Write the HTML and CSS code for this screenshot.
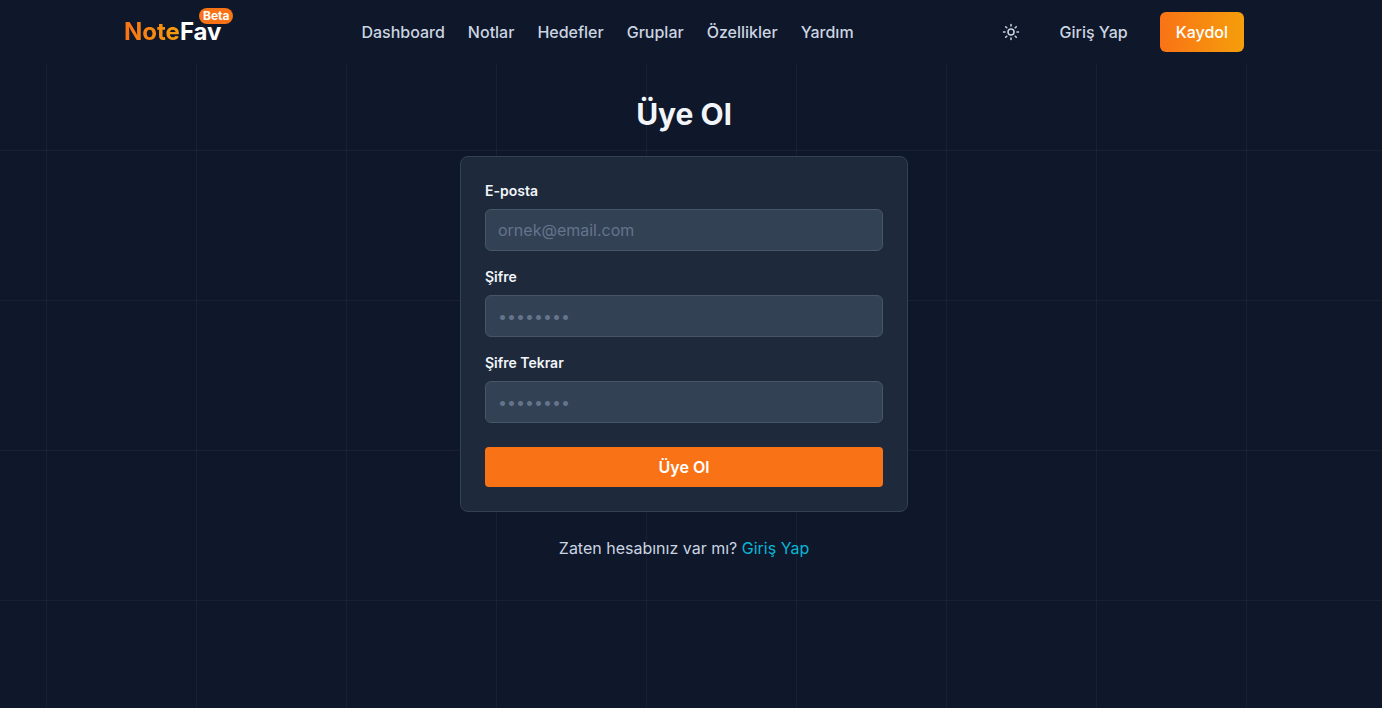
FILE: index.html
```html
<!DOCTYPE html>
<html lang="tr">
<head>
<meta charset="utf-8">
<meta name="viewport" content="width=device-width, initial-scale=1">
<title>NoteFav - Üye Ol</title>
<link rel="stylesheet" href="styles.css">
</head>
<body class="page">
<header class="header">
  <div class="header-inner">
    <a class="logo" href="#"><span class="logo-note">Note</span><span class="logo-fav">Fav</span><span class="logo-badge">Beta</span></a>
    <nav class="nav">
      <a href="#">Dashboard</a>
      <a href="#">Notlar</a>
      <a href="#">Hedefler</a>
      <a href="#">Gruplar</a>
      <a href="#">Özellikler</a>
      <a href="#">Yardım</a>
    </nav>
    <div class="actions">
      <button class="theme-toggle" type="button" aria-label="Tema">
        <svg width="18" height="18" viewBox="0 0 24 24" fill="none" stroke="currentColor" stroke-width="2" stroke-linecap="round" stroke-linejoin="round" aria-hidden="true"><circle cx="12" cy="12" r="4"/><path d="M12 2v2M12 20v2M4.93 4.93l1.41 1.41M17.66 17.66l1.41 1.41M2 12h2M20 12h2M6.34 17.66l-1.41 1.41M19.07 4.93l-1.41 1.41"/></svg>
      </button>
      <a class="btn" href="#">Giriş Yap</a>
      <a class="btn btn-signup" href="#">Kaydol</a>
    </div>
  </div>
</header>
<main class="main">
  <h1 class="title">Üye Ol</h1>
  <form class="card">
    <div class="field">
      <label for="email">E-posta</label>
      <input id="email" type="email" placeholder="ornek@email.com">
    </div>
    <div class="field">
      <label for="password">Şifre</label>
      <input id="password" type="password" placeholder="••••••••">
    </div>
    <div class="field">
      <label for="password-repeat">Şifre Tekrar</label>
      <input id="password-repeat" type="password" placeholder="••••••••">
    </div>
    <button class="submit" type="submit">Üye Ol</button>
  </form>
  <p class="login-hint">Zaten hesabınız var mı? <a href="#">Giriş Yap</a></p>
</main>
</body>
</html>
```
FILE: styles.css
```css
*, *::before, *::after { box-sizing: border-box; }

.page {
  margin: 0;
  padding-right: 14px;
  min-height: 100vh;
  font-family: Inter, "Liberation Sans", sans-serif;
  font-size: 16px;
  line-height: 24px;
  color: #f1f5f9;
  background-color: #0f172a;
  background-image:
    linear-gradient(to right, rgba(255, 255, 255, 0.04) 1px, transparent 1px),
    linear-gradient(to bottom, rgba(255, 255, 255, 0.04) 1px, transparent 1px);
  background-size: 150px 150px;
  background-position: 46px 0;
}

a { color: inherit; text-decoration: none; }
button, input { font: inherit; }

.header {
  margin-right: -14px;
  padding-right: 14px;
  background: #0f172a;
}

.header-inner {
  max-width: 1152px;
  height: 64px;
  margin: 0 auto;
  padding: 0 16px;
  display: flex;
  align-items: center;
  justify-content: space-between;
}

.logo {
  position: relative;
  font-size: 24px;
  line-height: 32px;
  font-weight: 700;
}

.logo-note {
  color: transparent;
  background: linear-gradient(to right, #f97316, #f59e0b);
  -webkit-background-clip: text;
  background-clip: text;
}

.logo-fav { color: #ffffff; }

.logo-badge {
  position: absolute;
  top: -8px;
  right: -12px;
  padding: 0 4px;
  border-radius: 8px;
  background: #f97316;
  color: #ffffff;
  font-size: 12px;
  line-height: 16px;
}

.nav {
  display: flex;
  gap: 23px;
  color: #cbd5e1;
  font-weight: 500;
}

.actions {
  display: flex;
  align-items: center;
  gap: 16px;
  color: #cbd5e1;
}

.theme-toggle {
  display: flex;
  padding: 8px;
  border: 0;
  background: none;
  color: inherit;
}

.btn {
  padding: 8px 16px;
  border-radius: 6px;
  font-weight: 500;
}

.btn-signup {
  color: #ffffff;
  background: linear-gradient(to right, #f97316, #f59e0b);
}

.main {
  max-width: 480px;
  margin: 0 auto;
  padding: 32px 16px;
}

.title {
  margin: 0 0 24px;
  font-size: 30px;
  line-height: 36px;
  font-weight: 700;
  text-align: center;
}

.card {
  display: flex;
  flex-direction: column;
  gap: 16px;
  padding: 24px;
  border: 1px solid #334155;
  border-radius: 8px;
  background: #1e293b;
}

.field {
  display: flex;
  flex-direction: column;
  gap: 8px;
}

.field label {
  font-size: 14px;
  line-height: 20px;
  font-weight: 600;
}

.field input {
  width: 100%;
  height: 42px;
  padding: 8px 12px;
  border: 1px solid #475569;
  border-radius: 6px;
  background: #334155;
  color: #f1f5f9;
}

.field input::placeholder { color: #64748b; }

.submit {
  margin-top: 8px;
  padding: 8px 16px;
  border: 0;
  border-radius: 4px;
  background: #f97316;
  color: #ffffff;
  font-weight: 600;
}

.login-hint {
  margin: 24px 0 0;
  text-align: center;
  color: #cbd5e1;
}

.login-hint a { color: #06b6d4; }
```
